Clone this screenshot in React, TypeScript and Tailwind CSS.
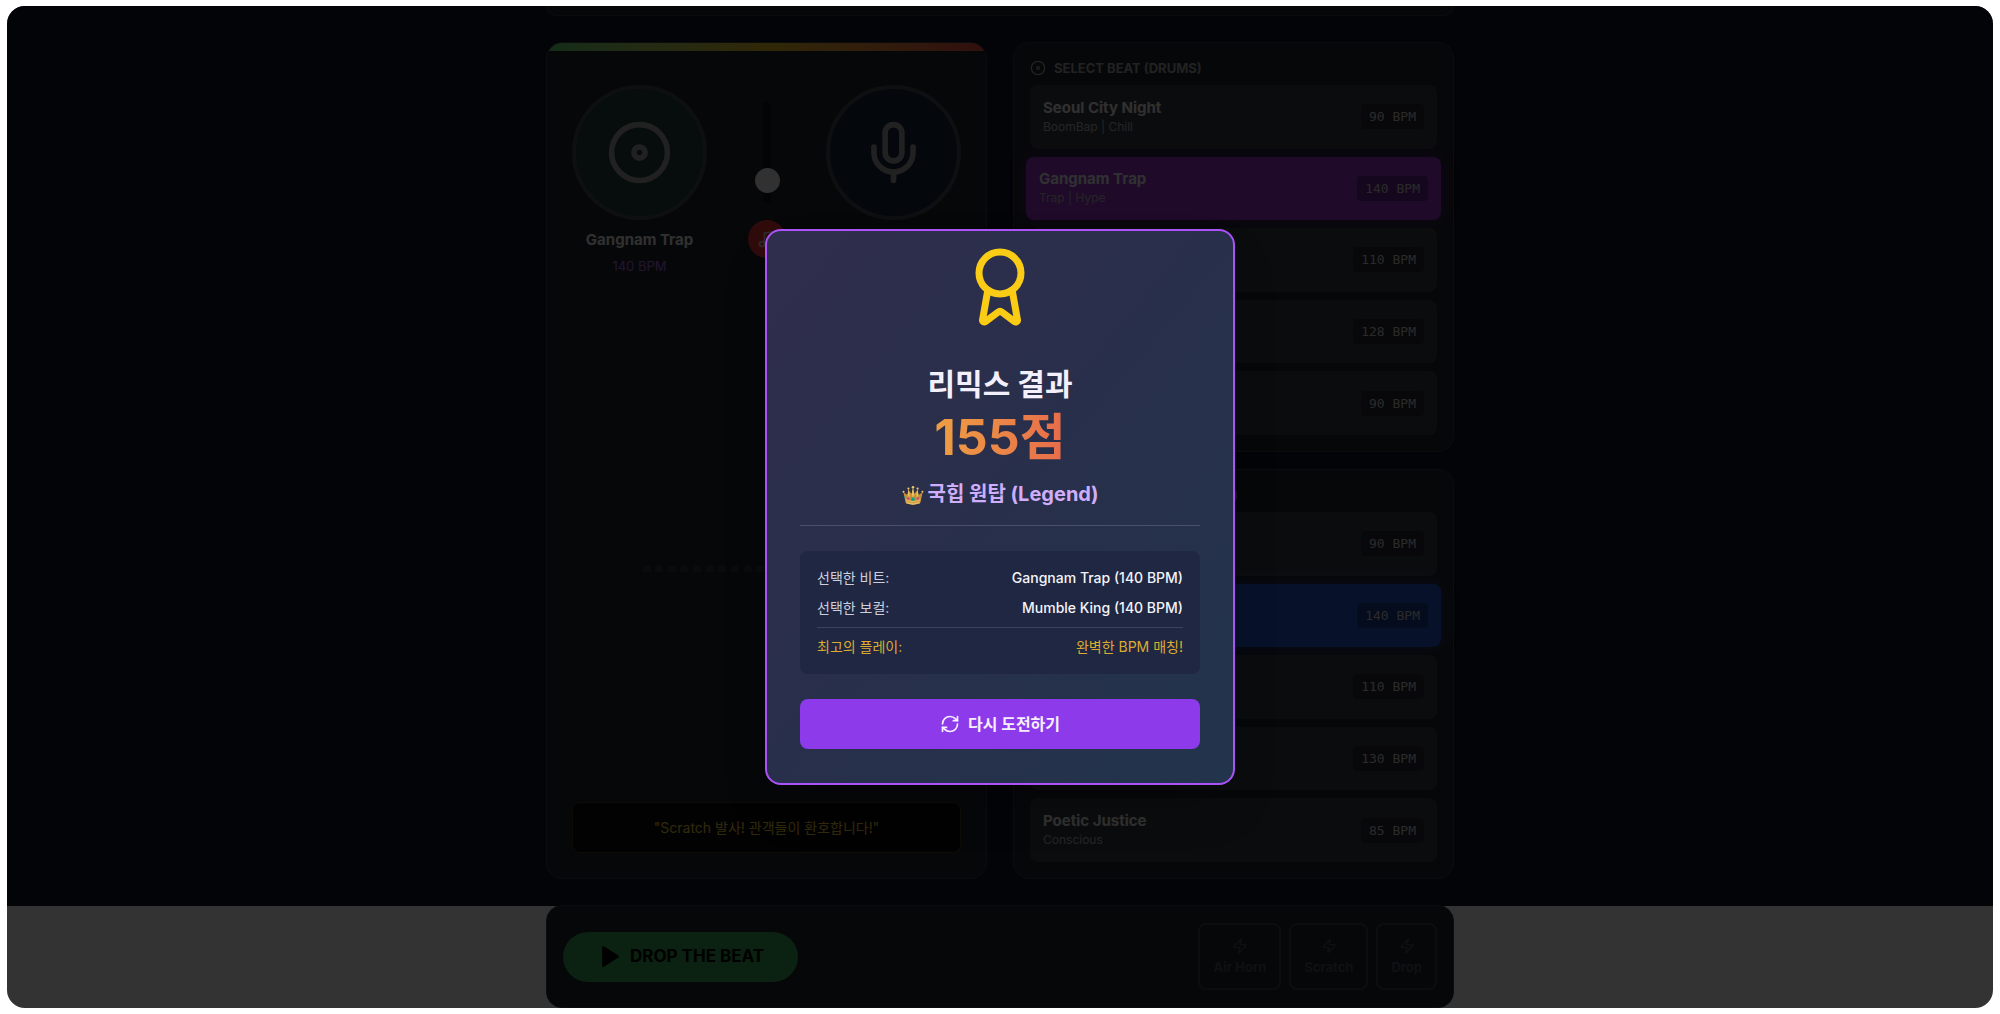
import React from "react";
import { Award, Disc, Mic, Music, RefreshCw, Zap } from "lucide-react";
import clsx from "clsx";

interface Track {
  name: string;
  tags: string;
  bpm: number;
}

const BEATS: Track[] = [
  { name: "Seoul City Night", tags: "BoomBap | Chill", bpm: 90 },
  { name: "Gangnam Trap", tags: "Trap | Hype", bpm: 140 },
  { name: "Hongdae Funk", tags: "Funk | Groove", bpm: 110 },
  { name: "Itaewon House", tags: "House | Club", bpm: 128 },
  { name: "Old School", tags: "BoomBap | Classic", bpm: 90 },
];

const VOCALS: Track[] = [
  { name: "Storyteller", tags: "Lyrical", bpm: 90 },
  { name: "Mumble King", tags: "Trap", bpm: 140 },
  { name: "Melody Maker", tags: "Singing", bpm: 110 },
  { name: "Speed Rapper", tags: "Fast", bpm: 130 },
  { name: "Poetic Justice", tags: "Conscious", bpm: 85 },
];

const EFFECTS = ["Air Horn", "Scratch", "Drop"];

function TrackList({
  title,
  icon,
  tracks,
  active,
  activeClass,
}: {
  title: string;
  icon: React.ReactNode;
  tracks: Track[];
  active: string;
  activeClass: string;
}) {
  return (
    <section className="flex flex-1 flex-col rounded-2xl border border-[#3a3d48] bg-[#22252f] p-4">
      <h3 className="mb-2 flex h-[18px] items-center gap-2 text-[13px] leading-[18px] font-bold text-[#a8a8a8] uppercase">
        {icon}
        {title}
      </h3>
      <div className="flex flex-1 flex-col gap-2">
        {tracks.map((track) => (
          <button
            key={track.name}
            type="button"
            className={clsx(
              "flex flex-1 items-center justify-between rounded-lg px-[13px] text-left",
              track.name === active ? activeClass : "bg-[#3b3f48]"
            )}
          >
            <span>
              <span className="block text-[15px] leading-5 font-bold text-[#f0f0f0]">{track.name}</span>
              <span className="block text-[12px] leading-[18px] text-[#b8b8b8]">{track.tags}</span>
            </span>
            <span className="rounded bg-black/30 px-2 py-1 font-['DejaVu_Sans_Mono','Liberation_Mono',monospace] text-[13px] leading-[17px] text-[#d2d2d2]">
              {track.bpm} BPM
            </span>
          </button>
        ))}
      </div>
    </section>
  );
}

function Mixer() {
  return (
    <section className="relative flex flex-col overflow-hidden rounded-2xl border border-[#3a3d48] bg-[#22252f] px-[25px] pt-[42px] pb-[25px]">
      <div className="absolute inset-x-0 top-0 h-2 bg-linear-to-r from-[#65e07c] via-[#eec425] to-[#f24c44]" />
      <div className="flex items-start justify-between">
        <div className="flex w-[135px] flex-col items-center">
          <div className="flex size-[135px] items-center justify-center rounded-full border-4 border-[#444a54] bg-[#26443c] text-[#a6a6a6]">
            <Disc className="size-[67px]" />
          </div>
          <p className="mt-2 text-[15px] leading-6 font-bold text-[#f0f0f0]">Gangnam Trap</p>
          <p className="mt-1 text-[13px] leading-5 text-[#b068e6]">140 BPM</p>
        </div>
        <div className="flex flex-col items-center gap-[17px] pt-[17px]">
          <div className="relative h-[101px] w-2 rounded-full bg-[#12141b]">
            <div className="absolute -left-2 top-[66px] size-[25px] rounded-full bg-[#f4f4f4]" />
          </div>
          <button
            type="button"
            aria-label="Mix"
            className="flex size-[38px] items-center justify-center rounded-full bg-[#ec3c38] text-[#ddd]"
          >
            <Music className="size-5" />
          </button>
        </div>
        <div className="flex w-[135px] flex-col items-center">
          <div className="flex size-[135px] items-center justify-center rounded-full border-4 border-[#444a54] bg-[#18263c] text-[#a6a6a6]">
            <Mic className="size-[67px]" />
          </div>
          <p className="mt-2 text-[15px] leading-6 font-bold text-[#f0f0f0]">Mumble King</p>
          <p className="mt-1 text-[13px] leading-5 text-[#5a86d6]">140 BPM</p>
        </div>
      </div>
      {/* visualizer at rest */}
      <div className="flex flex-1 items-center justify-center pt-[58px]">
        <div className="flex w-[248px] justify-between">
          {Array.from({ length: 20 }, (_, i) => (
            <div key={i} className="h-[7px] w-2 rounded-t-full bg-[#343740]" />
          ))}
        </div>
      </div>
      <p className="rounded-lg border border-[#4a3c1c] bg-[#0a0b0f] py-3 text-center text-[14px] leading-[25px] text-[#f0cd3c]">
        "Scratch 발사! 관객들이 환호합니다!"
      </p>
    </section>
  );
}

function Crown() {
  return (
    <svg viewBox="0 0 24 24" className="size-[22px]" aria-hidden="true">
      <path d="M1.500 9 4 20.500Q12 24 20 20.500L22.500 9 18 12 17 6 13.500 11 12 4 10.500 11 7 6 6 12Z" fill="#c98f35" />
      <path d="M10.500 11 12 4 13.500 11 12 16ZM6 12 7 6 8.500 11 8 15ZM18 12 17 6 15.500 11 16 15Z" fill="#e9bd5c" />
      <path d="M4 17.500Q12 21.500 20 17.500L19.500 21Q12 24 4.500 21Z" fill="#d6a34a" />
      <path d="M4 17Q12 21 20 17M4.500 20.500Q12 23.500 19.500 20.500" fill="none" stroke="#f2d484" strokeWidth=".7" />
      <g fill="#efc869">
        <circle cx="1.700" cy="8.500" r="1.100" />
        <circle cx="7" cy="5" r="1.200" />
        <circle cx="12" cy="3.500" r="1.400" />
        <circle cx="17" cy="5" r="1.200" />
        <circle cx="22.300" cy="8.500" r="1.100" />
      </g>
      <circle cx="12" cy="16.500" r="2" fill="#0fa083" />
      <circle cx="6.800" cy="15.800" r="1.300" fill="#d0409a" />
      <circle cx="17.200" cy="15.800" r="1.300" fill="#d0409a" />
      <circle cx="2.800" cy="14" r=".8" fill="#1f9f80" />
      <circle cx="21.200" cy="14" r=".8" fill="#1f9f80" />
    </svg>
  );
}

function ResultModal() {
  return (
    <div className="absolute inset-0 z-50 flex items-center justify-center bg-black/80">
      <div
        role="dialog"
        aria-labelledby="result-title"
        className="w-full max-w-[470px] rounded-2xl border-2 border-[#ab52f8] bg-linear-to-br from-[#302e4d] via-[#282f4b] to-[#22344c] px-[33px] pt-[14px] pb-[34px] text-center shadow-2xl"
      >
        <Award className="mx-auto size-[84px] text-[#facc15]" />
        <h2 id="result-title" className="mt-9 text-[30px] leading-[38px] font-bold text-[#f3f0fc]">
          리믹스 결과
        </h2>
        <p className="mt-2 text-[50px] leading-[52px] font-bold">
          <span className="bg-linear-to-r from-[#ee9f42] to-[#e76b4b] bg-clip-text text-transparent">155점</span>
        </p>
        <p className="mt-[17px] flex items-center justify-center gap-1 text-[20px] leading-[29px] font-bold text-[#cfaefb]">
          <Crown />
          국힙 원탑 (Legend)
        </p>
        <div className="mt-4 mb-[25px] border-t border-[#4c5169]" />
        <dl className="rounded-lg bg-[#1f2743] px-[17px] py-4 text-[14px] leading-[22px]">
          <div className="flex justify-between">
            <dt className="text-[#cfcedd]">선택한 비트:</dt>
            <dd className="font-medium text-[#f4f4f8]">Gangnam Trap (140 BPM)</dd>
          </div>
          <div className="mt-2 flex justify-between">
            <dt className="text-[#cfcedd]">선택한 보컬:</dt>
            <dd className="font-medium text-[#f4f4f8]">Mumble King (140 BPM)</dd>
          </div>
          <div className="mt-2 flex justify-between border-t border-[#3d435c] pt-2 text-[#ddab30]">
            <dt>최고의 플레이:</dt>
            <dd>완벽한 BPM 매칭!</dd>
          </div>
        </dl>
        <button
          type="button"
          className="mt-[25px] flex h-[50px] w-full items-center justify-center gap-2 rounded-lg bg-[#8d3aeb] text-[16px] font-bold text-[#f6effe]"
        >
          <RefreshCw className="size-5" />
          다시 도전하기
        </button>
      </div>
    </div>
  );
}

export default function App() {
  return (
    <div className="h-screen bg-white px-[7px] py-[6px] font-['Inter','Noto_Sans_CJK_KR',sans-serif]">
      <div className="relative flex h-full flex-col overflow-hidden rounded-[18px] bg-white">
        <main className="flex flex-1 flex-col bg-[#0f1426] pb-[27px]">
          <div className="mx-auto flex w-full max-w-[908px] flex-1 flex-col gap-[26px]">
            <header className="h-[10px] rounded-b-2xl border border-t-0 border-[#3a3d48] bg-[#22252f]" />
            <div className="grid flex-1 grid-cols-2 gap-[26px]">
              <Mixer />
              <div className="flex flex-col gap-[17px]">
                <TrackList
                  title="Select Beat (Drums)"
                  icon={<Disc className="size-4" />}
                  tracks={BEATS}
                  active="Gangnam Trap"
                  activeClass="-mx-1 bg-[#9935d2] shadow-[0_0_15px_rgba(147,51,234,0.4)]"
                />
                <TrackList
                  title="Select Vocal (A Capella)"
                  icon={<Mic className="size-4" />}
                  tracks={VOCALS}
                  active="Mumble King"
                  activeClass="-mx-1 bg-[#2358d0] shadow-[0_0_15px_rgba(37,99,235,0.4)]"
                />
              </div>
            </div>
          </div>
        </main>
        <footer className="mx-auto -mt-px flex h-[103px] w-full max-w-[908px] items-center justify-between rounded-2xl border border-[#3a3d48] bg-[#22252f] px-4">
          <button
            type="button"
            className="flex h-[50px] items-center gap-2 rounded-full bg-[#37a554] px-[34px] text-[17px] font-bold text-black"
          >
            <svg
              viewBox="0 0 24 24"
              className="size-[25px]"
              fill="currentColor"
              stroke="currentColor"
              strokeWidth="2"
              strokeLinejoin="round"
              aria-hidden="true"
            >
              <polygon points="6 3 20 12 6 21 6 3" />
            </svg>
            DROP THE BEAT
          </button>
          <div className="flex gap-2">
            {EFFECTS.map((effect) => (
              <button
                key={effect}
                type="button"
                className="flex h-[67px] flex-col items-center justify-center gap-1 rounded-lg border-2 border-[#40434c] px-[13px] text-[13px] leading-[18px] font-bold text-[#4e5058]"
              >
                <Zap className="size-4" />
                {effect}
              </button>
            ))}
          </div>
        </footer>
        <ResultModal />
      </div>
    </div>
  );
}
